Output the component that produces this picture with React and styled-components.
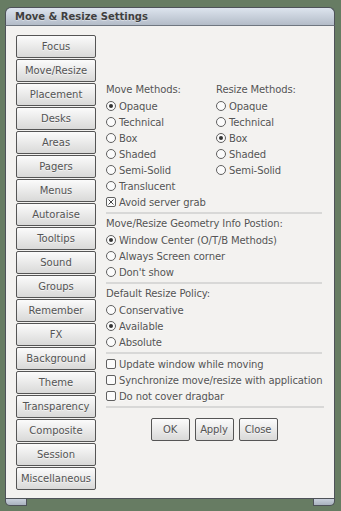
import styled, { createGlobalStyle } from 'styled-components';

const GlobalStyle = createGlobalStyle`
	html, body {
		margin: 0;
		padding: 0;
		background: #677c63;
		width: 341px;
		height: 511px;
		overflow: hidden;
		font-family: 'DejaVu Sans', 'Liberation Sans', sans-serif;
	}
`;

const Window = styled.div`
	margin: 7px 0 0 5px;
	width: 330px;
	height: 499px;
	display: flex;
	flex-direction: column;
	box-sizing: border-box;
`;

const TitleBar = styled.div`
	height: 19px;
	box-sizing: border-box;
	padding: 3px 0 0 9px;
	border: 1px solid #4e5259;
	border-bottom-color: #6f7680;
	border-radius: 6px 6px 0 0;
	background: linear-gradient(#dde4ee, #b3bcc8);
	font-size: 10px;
	font-weight: bold;
	color: #3f3f3f;
	text-shadow: 0 1px 0 rgba(255, 255, 255, 0.4);
`;

const Body = styled.div`
	flex: 1;
	display: flex;
	gap: 10px;
	padding: 9px 0 0 10px;
	background: #f3f2f0;
	border-left: 1px solid #4e5259;
	border-right: 1px solid #4e5259;
`;

const Frame = styled.div`
	height: 7px;
	display: flex;
	border-top: 1px solid #4e5259;
`;

const Grip = styled.div`
	width: 22px;
	box-sizing: border-box;
	border: 1px solid #4e5259;
	border-top: none;
	border-radius: ${props => (props.$right ? '0 0 5px 0' : '0 0 0 5px')};
	background: linear-gradient(#c8d0db, #a9b2bf);
`;

const FrameMiddle = styled.div`
	flex: 1;
`;

const Sidebar = styled.div`
	display: flex;
	flex-direction: column;
	gap: 1px;
	width: 80px;
`;

const Button = styled.div`
	width: ${props => props.$width || '80px'};
	height: 23px;
	box-sizing: border-box;
	display: flex;
	align-items: center;
	justify-content: center;
	border: 1px solid #555;
	border-radius: 2px;
	background: linear-gradient(#fbfbfb, #d9d9d8);
	font-size: 10px;
	color: #545454;
	text-shadow: 0 1px 0 rgba(255, 255, 255, 0.6);
	white-space: nowrap;
`;

const Panel = styled.div`
	margin-top: 47px;
	width: 216px;
	display: flex;
	flex-direction: column;
	font-size: 10px;
	letter-spacing: -0.1px;
	color: #545454;
	text-shadow: 0 1px 0 rgba(255, 255, 255, 0.6);
`;

const Columns = styled.div`
	display: grid;
	grid-template-columns: 110px 106px;
`;

const Column = styled.div`
	display: flex;
	flex-direction: column;
`;

const Label = styled.div`
	height: 16px;
	line-height: 16px;
	white-space: nowrap;
`;

const Row = styled.div`
	height: 16px;
	display: flex;
	align-items: center;
	gap: 3px;
	white-space: nowrap;
`;

const Radio = styled.span`
	width: 10px;
	height: 10px;
	box-sizing: border-box;
	border: 1px solid #606060;
	border-radius: 50%;
	background: #fbfbfb;
	display: flex;
	align-items: center;
	justify-content: center;
	flex-shrink: 0;
	&::after {
		content: '';
		width: 4px;
		height: 4px;
		border-radius: 50%;
		background: #333;
		display: ${props => (props.$checked ? 'block' : 'none')};
	}
`;

const Check = styled.span`
	width: 10px;
	height: 10px;
	box-sizing: border-box;
	border: 1px solid #606060;
	border-radius: 2px;
	background: #fbfbfb;
	flex-shrink: 0;
	display: flex;
	align-items: center;
	justify-content: center;
`;

const Separator = styled.div`
	height: 2px;
	margin: 2px ${props => (props.$wide ? '-2px' : '0')} 2px 0;
	background: #d8d8d7;
`;

const Actions = styled.div`
	display: flex;
	justify-content: center;
	gap: 5px;
	margin-top: 8px;
`;

const pages = [
	'Focus',
	'Move/Resize',
	'Placement',
	'Desks',
	'Areas',
	'Pagers',
	'Menus',
	'Autoraise',
	'Tooltips',
	'Sound',
	'Groups',
	'Remember',
	'FX',
	'Background',
	'Theme',
	'Transparency',
	'Composite',
	'Session',
	'Miscellaneous'
];

const moveMethods = ['Opaque', 'Technical', 'Box', 'Shaded', 'Semi-Solid', 'Translucent'];
const resizeMethods = ['Opaque', 'Technical', 'Box', 'Shaded', 'Semi-Solid'];

function RadioRow({ label, checked }) {
	return (
		<Row>
			<Radio $checked={checked} />
			{label}
		</Row>
	);
}

function CheckRow({ label, checked }) {
	return (
		<Row>
			<Check>
				{checked && (
					<svg width="6" height="6" viewBox="0 0 6 6">
						<path d="M0.5 0.5L5.5 5.5M5.5 0.5L0.5 5.5" stroke="#444" strokeWidth="1" />
					</svg>
				)}
			</Check>
			{label}
		</Row>
	);
}

function App() {
	return (
		<>
			<GlobalStyle />
			<Window>
				<TitleBar>Move &amp; Resize Settings</TitleBar>
				<Body>
					<Sidebar>
						{pages.map(page => (
							<Button key={page}>{page}</Button>
						))}
					</Sidebar>
					<Panel>
						<Columns>
							<Column>
								<Label>Move Methods:</Label>
								{moveMethods.map((m, i) => (
									<RadioRow key={m} label={m} checked={i === 0} />
								))}
								<CheckRow label="Avoid server grab" checked />
							</Column>
							<Column>
								<Label>Resize Methods:</Label>
								{resizeMethods.map((m, i) => (
									<RadioRow key={m} label={m} checked={i === 2} />
								))}
							</Column>
						</Columns>
						<Separator />
						<Label>Move/Resize Geometry Info Postion:</Label>
						<RadioRow label="Window Center (O/T/B Methods)" checked />
						<RadioRow label="Always Screen corner" />
						<RadioRow label="Don't show" />
						<Separator />
						<Label>Default Resize Policy:</Label>
						<RadioRow label="Conservative" />
						<RadioRow label="Available" checked />
						<RadioRow label="Absolute" />
						<Separator />
						<CheckRow label="Update window while moving" />
						<CheckRow label="Synchronize move/resize with application" />
						<CheckRow label="Do not cover dragbar" />
						<Separator $wide />
						<Actions>
							<Button $width="39px">OK</Button>
							<Button $width="39px">Apply</Button>
							<Button $width="39px">Close</Button>
						</Actions>
					</Panel>
				</Body>
				<Frame>
					<Grip />
					<FrameMiddle />
					<Grip $right />
				</Frame>
			</Window>
		</>
	);
}

export default App;
